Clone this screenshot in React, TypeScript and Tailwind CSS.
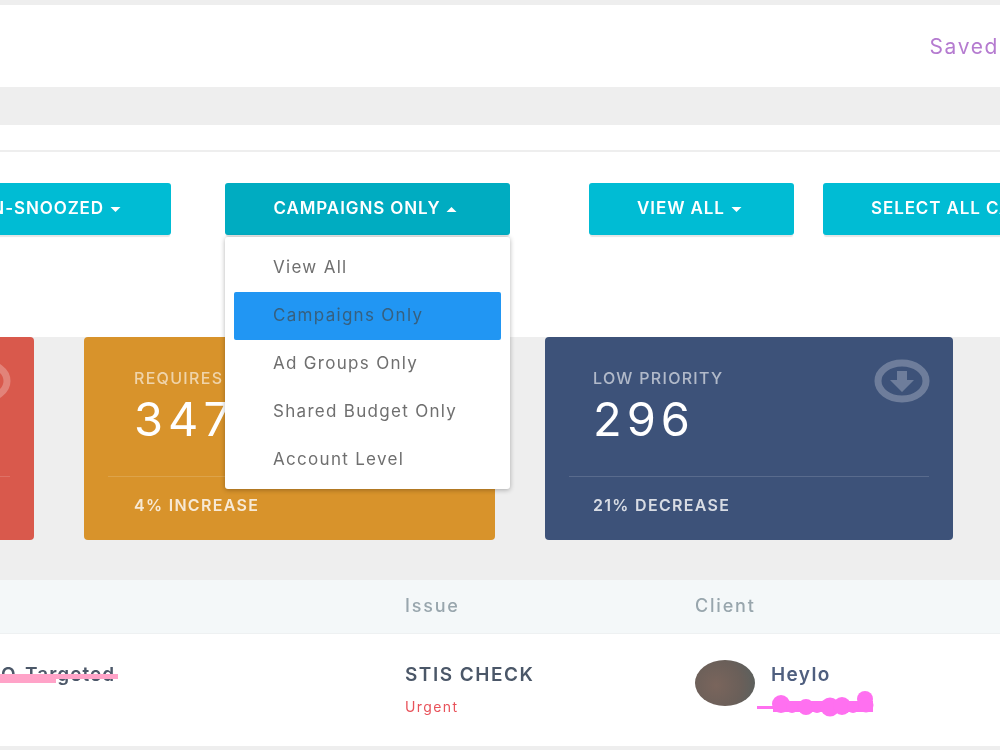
const dropdownItems = ['View All', 'Campaigns Only', 'Ad Groups Only', 'Shared Budget Only', 'Account Level'];

function Caret({ up = false }: { up?: boolean }) {
  return (
    <svg width="11" height="5" viewBox="0 0 10 5" className="ml-[6px] inline-block shrink-0" fill="currentColor">
      <path d={up ? 'M0 5 L5 0 L10 5 Z' : 'M0 0 L5 5 L10 0 Z'} />
    </svg>
  );
}

function FilterButton({ label, className, up = false, caret = true }: { label: string; className: string; up?: boolean; caret?: boolean }) {
  return (
    <button
      type="button"
      className={`flex h-[52px] shrink-0 items-center rounded-[3px] text-[17px] font-semibold tracking-[0.9px] whitespace-nowrap text-white shadow-[0_3px_1px_-1px_rgba(0,0,0,0.1)] ${className}`}
    >
      {label}
      {caret && <Caret up={up} />}
    </button>
  );
}

function ArrowCircle({ up = false }: { up?: boolean }) {
  return (
    <svg width="56" height="44" viewBox="0 0 56 44" className="absolute top-[22px] right-[23px] opacity-25" fill="none">
      <ellipse cx="28" cy="22" rx="24" ry="18" stroke="white" strokeWidth="7" />
      <g transform={up ? 'rotate(180 28 22)' : undefined}>
        <path d="M23 12 H33 V21 H40 L28 33 L16 21 H23 Z" fill="white" />
      </g>
    </svg>
  );
}

function StatCard({ label, value, note, color, width, inset = 'pl-6', up = false }: { label: string; value: string; note: string; color: string; width: string; inset?: string; up?: boolean }) {
  return (
    <div className={`relative flex h-[203px] shrink-0 flex-col rounded-[4px] px-6 text-white ${width} ${color}`}>
      <ArrowCircle up={up} />
      <div className={`h-[140px] border-b border-white/15 pt-[31px] ${inset}`}>
        <p className="text-[16px] leading-5 font-medium tracking-[1.3px] text-white/60">{label}</p>
        <p className="mt-[5px] text-[47px] leading-[52px] tracking-[5px]">{value}</p>
      </div>
      <p className={`mt-[18px] text-[16px] leading-5 font-semibold tracking-[1.3px] text-white/80 ${inset}`}>{note}</p>
    </div>
  );
}

export default function App() {
  return (
    <div className="relative h-[750px] w-[1000px] overflow-hidden bg-[#eeeeee] pt-[5px] font-['Inter',sans-serif] blur-[0.4px]">
      {/* top bar */}
      <div className="flex h-[82px] items-center justify-end bg-white pt-[1px] pr-[1px]">
        <span className="text-[21px] font-normal tracking-[1.6px] text-[#b57bd0]">Saved</span>
      </div>

      {/* filters */}
      <div className="mt-[38px] h-[212px] bg-white">
        <div className="h-[27px] border-b-2 border-[#eeeeee]" />
        <div className="relative mt-[31px] flex">
          <FilterButton label="NON-SNOOZED" className="-ml-[60px] w-[231px] justify-end bg-[#00bcd4] pr-[50px]" />
          <FilterButton label="CAMPAIGNS ONLY" up className="ml-[54px] w-[285px] justify-center bg-[#00acc1] pr-[4px]" />
          <FilterButton label="VIEW ALL" className="ml-[79px] w-[205px] justify-center bg-[#00bcd4] pr-[4px]" />
          <FilterButton label="SELECT ALL CAMPAIGNS" caret={false} className="ml-[29px] w-[300px] justify-start bg-[#00bcd4] pl-12" />

          {/* open dropdown */}
          <div className="absolute top-[54px] left-[225px] z-10 h-[252px] w-[285px] rounded-[3px] bg-white px-[9px] pt-[7px] shadow-[0_1px_5px_rgba(0,0,0,0.3)]">
            {dropdownItems.map((item) => (
              <div
                key={item}
                className={`flex h-12 items-center rounded-[2px] pb-[1px] pl-[39px] text-[17px] tracking-[1.3px] ${
                  item === 'Campaigns Only' ? 'bg-[#2196f3] text-[#37607f]' : 'text-[#6f6f6f]'
                }`}
              >
                {item}
              </div>
            ))}
          </div>
        </div>
      </div>

      {/* stat cards */}
      <div className="-ml-[376px] flex gap-[50px]">
        <StatCard label="HIGH PRIORITY" value="128" note="12% INCREASE" up color="bg-[#d9594c]" width="w-[410px]" />
        <StatCard label="REQUIRES ATTENTION" value="347" note="4% INCREASE" color="bg-[#d8932b]" width="w-[411px]" inset="pl-[26px]" />
        <StatCard label="LOW PRIORITY" value="296" note="21% DECREASE" color="bg-[#3d5279]" width="w-[408px]" />
      </div>

      {/* table */}
      <div className="mt-10 bg-white">
        <div className="flex h-[54px] items-center border-b border-[#eef1f2] bg-[#f4f8f9] pb-[2px] text-[18px] font-medium tracking-[1.8px] text-[#98a6ad]">
          <span className="ml-[405px] w-[290px]">Issue</span>
          <span>Client</span>
        </div>
        <div className="relative flex h-[112px] pt-[29px]">
          <div className="relative w-[405px] shrink-0">
            <span className="absolute top-0 right-[290px] text-[19px] leading-6 font-semibold tracking-[1px] whitespace-nowrap text-[#4b5768]">GEO-Targeted</span>
            <svg width="120" height="12" viewBox="0 0 120 12" className="absolute top-[10px] left-0">
              <path d="M0 1 H118 V6 H56 V10 H0 Z" fill="#ffa3c8" />
            </svg>
          </div>
          <div className="w-[290px] shrink-0">
            <p className="text-[19px] leading-6 font-semibold tracking-[1.5px] text-[#4b5768]">STIS CHECK</p>
            <p className="mt-[10px] text-[14px] leading-5 tracking-[1.4px] text-[#e8525a]">Urgent</p>
          </div>
          <div className="-mt-[3px] flex">
            <div className="h-[46px] w-[60px] rounded-[50%] bg-[radial-gradient(circle_at_35%_55%,#7a655c,#6a5f59_55%,#55605f)]" />
            <p className="mt-[3px] ml-4 text-[19px] leading-6 font-semibold tracking-[1.4px] text-[#4f5f7f]">Heylo</p>
          </div>
          {/* pink scribble over the client's email */}
          <svg width="118" height="28" viewBox="0 0 118 28" className="absolute top-[56px] left-[756px]" fill="#ff70f0">
            <path d="M1 16 H20 V19 H1 Z" />
            <path d="M17 11 H117 V22 H17 Z" />
            <circle cx="25" cy="14" r="9" />
            <circle cx="36" cy="17" r="6" />
            <circle cx="50" cy="17" r="8" />
            <circle cx="61" cy="17" r="6" />
            <circle cx="74" cy="17" r="9.5" />
            <circle cx="86" cy="16" r="9" />
            <circle cx="97" cy="17" r="6" />
            <circle cx="109" cy="9" r="8" />
            <circle cx="110" cy="15" r="7.5" />
          </svg>
        </div>
      </div>
    </div>
  );
}
